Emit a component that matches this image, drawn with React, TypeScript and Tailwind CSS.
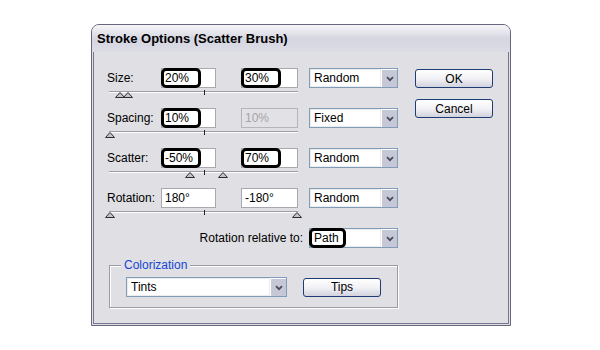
import React from 'react'

const FONT = "font-['Liberation_Sans',Arial,sans-serif]"

function Chevron() {
  return (
    <svg width="8" height="6" viewBox="0 0 8 6">
      <path d="M1 1.2 L4 4.2 L7 1.2" fill="none" stroke="#4a4a5a" strokeWidth="1.8" />
    </svg>
  )
}

function Thumb({ left }: { left: number }) {
  return (
    <svg className="absolute top-[1px]" style={{ left: left - 5 }} width="10" height="6" viewBox="0 0 10 6">
      <polygon points="5,0.5 9.5,5.5 0.5,5.5" fill="#c4c4c8" stroke="#2e2e2e" strokeWidth="1" />
    </svg>
  )
}

function Slider({ thumbs }: { thumbs: number[] }) {
  return (
    <div className="relative ml-[2px] mt-[3px] h-[8px] w-[189px]">
      <div className="h-[1px] bg-[#9c9ca6]" />
      <div className="h-[1px] bg-white" />
      <div className="absolute left-[95px] top-[-1px] h-[5px] w-[1px] bg-[#222]" />
      {thumbs.map((t) => (
        <Thumb key={t} left={t} />
      ))}
    </div>
  )
}

function Field({
  value,
  width,
  marked,
  disabled,
}: {
  value: string
  width: string
  marked?: boolean
  disabled?: boolean
}) {
  return (
    <div
      className={`relative h-[20px] ${width} border ${
        disabled ? 'border-[#b4b4ba] bg-[#e2e2e6] text-[#a4a4a8]' : 'border-[#a8a8b0] bg-white text-black'
      }`}
    >
      <span className="block pl-[3px] leading-[18px]">{value}</span>
      {marked && (
        <div className="absolute left-[-1px] top-[-1px] h-[20px] w-[40px] rounded-[5px] border-[3px] border-black" />
      )}
    </div>
  )
}

function Select({ value, width, marked }: { value: string; width: string; marked?: boolean }) {
  return (
    <div className={`relative flex h-[20px] ${width} border border-[#7f9db9] bg-white`}>
      <div className="flex-1 border border-[#ececee] pl-[3px] leading-[16px]">{value}</div>
      <div className="flex w-[16px] items-center justify-center border-l border-t border-white bg-[#c6c8d8]">
        <Chevron />
      </div>
      {marked && (
        <div className="absolute left-[-1px] top-[-1px] h-[20px] w-[37px] rounded-[5px] border-[3px] border-black" />
      )}
    </div>
  )
}

function XpButton({ label, className = '' }: { label: string; className?: string }) {
  return (
    <button
      type="button"
      className={`h-[19px] w-[78px] rounded-[3px] border border-[#1d3d74] bg-gradient-to-b from-white via-[#f2f2f6] to-[#d2d2de] text-[12px] leading-none text-black ${className}`}
    >
      {label}
    </button>
  )
}

interface RowProps {
  label: string
  a: string
  b: string
  mode: string
  markA?: boolean
  markB?: boolean
  disabledB?: boolean
  thumbs: number[]
}

function OptionRow({ label, a, b, mode, markA, markB, disabledB, thumbs }: RowProps) {
  return (
    <div className="flex h-[40px] flex-col">
      <div className="flex items-center">
        <span className="w-[54px]">{label}</span>
        <Field value={a} width="w-[55px]" marked={markA} />
        <div className="ml-[25px]">
          <Field value={b} width="w-[57px]" marked={markB} disabled={disabledB} />
        </div>
        <div className="ml-[11px]">
          <Select value={mode} width="w-[89px]" />
        </div>
      </div>
      <Slider thumbs={thumbs} />
    </div>
  )
}

export default function App() {
  const rows: RowProps[] = [
    { label: 'Size:', a: '20%', b: '30%', mode: 'Random', markA: true, markB: true, thumbs: [11, 19] },
    { label: 'Spacing:', a: '10%', b: '10%', mode: 'Fixed', markA: true, disabledB: true, thumbs: [1] },
    { label: 'Scatter:', a: '-50%', b: '70%', mode: 'Random', markA: true, markB: true, thumbs: [81, 114] },
    { label: 'Rotation:', a: '180°', b: '-180°', mode: 'Random', thumbs: [1, 188] },
  ]

  return (
    <div className={`h-[350px] w-[600px] bg-white pl-[91px] pt-[24px] text-[12px] text-black ${FONT}`}>
      <div className="flex h-[302px] w-[420px] flex-col overflow-hidden rounded-t-[8px] border border-[#66667e] bg-[#dfdfe4]">
        {/* title bar */}
        <div className="h-[27px] shrink-0 bg-gradient-to-b from-[#f6f6f9] via-[#d6d6e1] to-[#dcdce5] pl-[5px] pt-[7px] text-[13px] font-bold leading-none text-black">
          Stroke Options (Scatter Brush)
        </div>

        {/* body */}
        <div className="mx-[1px] mb-[1px] flex flex-1 border border-t-0 border-[#77778f] pl-[13px] pt-[16px]">
          <div className="w-[291px]">
            {rows.map((r) => (
              <OptionRow key={r.label} {...r} />
            ))}

            <div className="flex h-[20px] items-center justify-end">
              <span>Rotation relative to:</span>
              <div className="ml-[6px]">
                <Select value="Path" width="w-[89px]" marked />
              </div>
            </div>

            {/* Colorization group */}
            <div className="relative ml-[2px] mt-[17px] h-[43px] w-[289px] border border-[#9c9ca6] pl-[16px] pt-[11px] shadow-[inset_1px_1px_0_#ffffff,1px_1px_0_#ffffff]">
              <span className="absolute left-[11px] top-[-9px] bg-[#dfdfe4] px-[3px] leading-[16px] text-[#1446d8]">
                Colorization
              </span>
              <div className="flex items-center">
                <Select value="Tints" width="w-[161px]" />
                <XpButton label="Tips" className="ml-[16px]" />
              </div>
            </div>
          </div>

          <div className="ml-[17px] flex flex-col pt-[1px]">
            <XpButton label="OK" />
            <XpButton label="Cancel" className="mt-[11px]" />
          </div>
        </div>
      </div>
    </div>
  )
}
